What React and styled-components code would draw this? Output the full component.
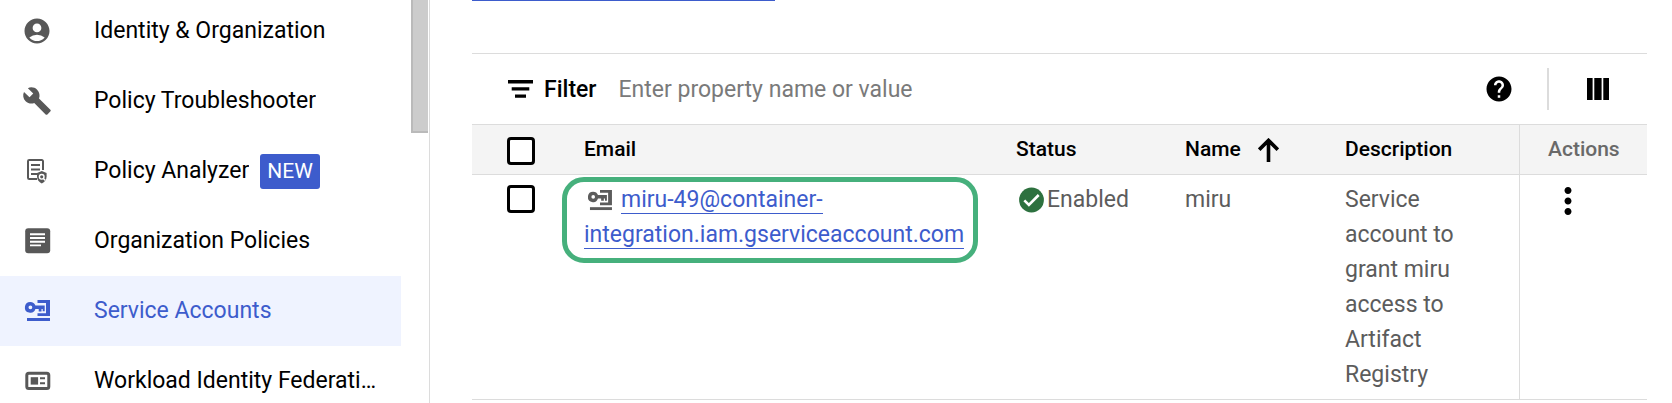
import React from "react";
import styled, { createGlobalStyle, css } from "styled-components";
import { MdAccountCircle, MdBuild, MdHelp, MdMoreVert } from "react-icons/md";

const color = {
  text: "#000000",
  muted: "#5c5c5c",
  icon: "#585858",
  link: "#3d5ccc",
  selected: "#eff3ff",
  line: "#dcdcdc",
  head: "#f4f4f4",
  enabled: "#2d713f",
  ring: "#46b07c",
};

const GlobalStyle = createGlobalStyle`
  *, *::before, *::after { box-sizing: border-box; }
  body {
    margin: 0;
    background: #ffffff;
    color: ${color.text};
    font-family: Roboto, "Liberation Sans", sans-serif;
    font-size: 23px;
    line-height: 35px;
  }
`;

const Shell = styled.div`
  display: flex;
  height: 100vh;
  overflow: hidden;
`;

const Sidebar = styled.aside`
  display: flex;
  flex: 0 0 430px;
  border-right: 1px solid ${color.line};
  overflow: hidden;
`;

const NavList = styled.nav`
  flex: 0 0 401px;
  min-width: 0;
  margin-top: -4px;
`;

const NavLink = styled.a`
  display: flex;
  align-items: center;
  height: 70px;
  padding: 0 24px 0 22px;
  color: ${({ $selected }) => ($selected ? color.link : color.text)};
  background: ${({ $selected }) => ($selected ? color.selected : "transparent")};
  text-decoration: none;

  svg {
    flex: none;
    width: 30px;
    height: 30px;
    margin-right: 42px;
    color: ${({ $selected }) => ($selected ? color.link : color.icon)};
  }
`;

const NavLabel = styled.span`
  padding-bottom: 2px;
  overflow: hidden;
  text-overflow: ellipsis;
  white-space: nowrap;
`;

const Badge = styled.span`
  margin-left: 11px;
  padding: 0 7px;
  border-radius: 3px;
  background: ${color.link};
  color: #ffffff;
  font-size: 21px;
`;

const ScrollThumb = styled.div`
  width: 17px;
  height: 133px;
  margin-left: 10px;
  border: solid #bababa;
  border-width: 0 0 2px 2px;
  background: #cccccc;
`;

const Main = styled.main`
  flex: 1;
  min-width: 0;
  padding: 0 25px 0 42px;
`;

const TabUnderline = styled.div`
  width: 303px;
  height: 1px;
  margin-bottom: 52px;
  background: ${color.link};
`;

const Toolbar = styled.div`
  display: flex;
  align-items: center;
  height: 71px;
  padding: 0 38px 0 36px;
  border-top: 1px solid ${color.line};
`;

const FilterLabel = styled.label`
  display: flex;
  align-items: center;
  gap: 11px;
  font-weight: 500;
`;

const FilterInput = styled.input`
  flex: 1;
  min-width: 0;
  margin: 0 22px;
  padding: 0;
  border: 0;
  outline: 0;
  background: transparent;
  font: inherit;

  &::placeholder {
    color: #7a7a7a;
    opacity: 1;
  }
`;

const IconButton = styled.button`
  display: flex;
  padding: 0;
  border: 0;
  background: transparent;
  color: ${color.text};
  cursor: pointer;
`;

const ToolbarDivider = styled.div`
  width: 2px;
  height: 42px;
  margin: 0 38px 0 33px;
  background: ${color.line};
`;

const Table = styled.table`
  width: 100%;
  table-layout: fixed;
  border-collapse: separate;
  border-spacing: 0;
`;

const Column = styled.col`
  width: ${({ $width }) => ($width ? `${$width}px` : "auto")};
`;

const cell = css`
  padding: 7px 28px;
  border-bottom: 1px solid ${color.line};
  text-align: left;
`;

const HeadCell = styled.th`
  ${cell}
  height: 51px;
  padding: ${({ $check }) => ($check ? "8px 0 6px 35px" : "7px 0 7px 28px")};
  border-top: 1px solid ${color.line};
  border-left: ${({ $divided }) => ($divided ? `1px solid ${color.line}` : 0)};
  background: ${color.head};
  color: ${({ $divided }) => ($divided ? "#696969" : color.text)};
  font-size: 21px;
  font-weight: 500;
`;

const Cell = styled.td`
  ${cell}
  padding-left: ${({ $check }) => ($check ? 35 : 28)}px;
  padding-right: ${({ $check }) => ($check ? 0 : 28)}px;
  border-left: ${({ $divided }) => ($divided ? `1px solid ${color.line}` : 0)};
  color: ${color.muted};
  vertical-align: top;
`;

const EmailCell = styled(Cell)`
  position: relative;
`;

const Checkbox = styled.input`
  appearance: none;
  display: block;
  width: 28px;
  height: 28px;
  margin: 3px 0;
  border: 3px solid #000000;
  border-radius: 4px;
  background: #ffffff;
`;

const SortButton = styled(IconButton)`
  align-items: center;
  gap: 17px;
  font: inherit;
`;

const Highlight = styled.div`
  position: absolute;
  top: 2px;
  left: 6px;
  right: 10px;
  height: 86px;
  border: 5px solid ${color.ring};
  border-radius: 22px;
  pointer-events: none;
`;

const EmailLink = styled.a`
  border-bottom: 1px solid ${color.link};
  color: ${color.link};
  text-decoration: none;
`;

const InlineKey = styled.svg`
  width: 24px;
  height: 22px;
  margin: 0 9px 0 4px;
  vertical-align: -4px;
`;

const Status = styled.span`
  display: flex;
  align-items: center;
  gap: 1px;

  svg {
    flex: none;
  }
`;

const MenuButton = styled(IconButton)`
  margin: -2px 0 0 -1px;
`;

function KeyShape() {
  return (
    <g fill="currentColor">
      <path
        fillRule="evenodd"
        d="M8.4 5.9a5.4 5.4 0 0 1 5 3.5h9.3v5.8h-2V13h-1.2v2.4h-2.8V13h-3.3a5.4 5.4 0 1 1-5-7.1Zm0 3.5a1.9 1.9 0 1 0 0 3.8 1.9 1.9 0 0 0 0-3.8Z"
      />
      <path d="M15.5 4H28v16H15.5v-2.8H24V7h-8.5Z" />
      <path d="M5 22h23v3H5Z" />
    </g>
  );
}

function KeyIcon() {
  return (
    <svg viewBox="0 0 30 30" aria-hidden="true">
      <KeyShape />
    </svg>
  );
}

function AnalyzerIcon() {
  return (
    <svg viewBox="0 0 30 30" fill="none" stroke="currentColor" strokeWidth="2" aria-hidden="true">
      <path d="M15 23H7.2a1.2 1.2 0 0 1-1.2-1.2V5.2A1.2 1.2 0 0 1 7.2 4h12.6A1.2 1.2 0 0 1 21 5.2V14" />
      <path d="M9 9h9M9 13.5h9M9 18h6" />
      <path
        d="m19.8 15 4.8 2v3.6c0 3.3-2 5.8-4.8 6.9-2.8-1.1-4.8-3.6-4.8-6.9V17Z"
        fill="currentColor"
        stroke="none"
      />
      <circle cx="19.7" cy="20.8" r="2.3" stroke="#ffffff" strokeWidth="1.4" />
      <path d="m21.4 22.5 2 2" stroke="#ffffff" strokeWidth="1.4" />
    </svg>
  );
}

function PoliciesIcon() {
  return (
    <svg viewBox="0 0 30 30" aria-hidden="true">
      <rect x="3.2" y="2.2" width="25" height="25" rx="3" fill="currentColor" />
      <path d="M8 8.3h15M8 12h15M8 15.7h15M8 19.4h11" stroke="#ffffff" strokeWidth="1.9" />
    </svg>
  );
}

function WorkloadIcon() {
  return (
    <svg viewBox="0 0 30 30" fill="none" stroke="currentColor" aria-hidden="true">
      <rect x="4.8" y="7.2" width="22" height="15.4" rx="2" strokeWidth="3" />
      <rect x="8.7" y="11.2" width="7.4" height="7.4" fill="currentColor" stroke="none" />
      <path d="M18 12.3h5M18 17.3h5" strokeWidth="2" />
    </svg>
  );
}

function FilterIcon() {
  return (
    <svg width="25" height="18" viewBox="0 0 25 18" fill="currentColor" aria-hidden="true">
      <path d="M0 0h25v3.5H0ZM3.7 7.2h17.6v3.4H3.7ZM7 14.4h11v3.4H7Z" />
    </svg>
  );
}

function ColumnsIcon() {
  return (
    <svg width="22" height="22" viewBox="0 0 22 22" fill="currentColor" aria-hidden="true">
      <path d="M0 0h5.6v22H0ZM7.3 0h7.3v22H7.3ZM16.3 0h5.7v22h-5.7Z" />
    </svg>
  );
}

function ArrowUpIcon() {
  return (
    <svg width="21" height="24" viewBox="0 0 21 24" fill="none" stroke="currentColor" strokeWidth="3.6" aria-hidden="true">
      <path d="M10.5 24V3M1.2 11.7l9.3-9.3 9.3 9.3" />
    </svg>
  );
}

function EnabledIcon() {
  return (
    <svg width="30" height="30" viewBox="0 0 30 30" aria-hidden="true">
      <circle cx="15.5" cy="15" r="12.4" fill={color.enabled} />
      <path d="m8.3 15.4 4.6 4.6 9.8-10" fill="none" stroke="#ffffff" strokeWidth="2.6" />
    </svg>
  );
}

const navItems = [
  { label: "Identity & Organization", icon: MdAccountCircle },
  { label: "Policy Troubleshooter", icon: MdBuild },
  { label: "Policy Analyzer", icon: AnalyzerIcon, badge: "NEW" },
  { label: "Organization Policies", icon: PoliciesIcon },
  { label: "Service Accounts", icon: KeyIcon, selected: true },
  { label: "Workload Identity Federation", icon: WorkloadIcon },
];

export default function App() {
  return (
    <>
      <GlobalStyle />
      <Shell>
        <Sidebar>
          <NavList aria-label="IAM & Admin">
            {navItems.map(({ label, icon: Icon, badge, selected }) => (
              <NavLink key={label} href="#" $selected={selected} aria-current={selected ? "page" : undefined}>
                <Icon />
                <NavLabel>{label}</NavLabel>
                {badge && <Badge>{badge}</Badge>}
              </NavLink>
            ))}
          </NavList>
          <ScrollThumb />
        </Sidebar>
        <Main>
          <TabUnderline />
          <Toolbar>
            <FilterLabel htmlFor="filter">
              <FilterIcon />
              Filter
            </FilterLabel>
            <FilterInput id="filter" type="text" placeholder="Enter property name or value" />
            <IconButton type="button" aria-label="Help">
              <MdHelp size={30} />
            </IconButton>
            <ToolbarDivider />
            <IconButton type="button" aria-label="Column display options">
              <ColumnsIcon />
            </IconButton>
          </Toolbar>
          <Table>
            <colgroup>
              <Column $width={84} />
              <Column />
              <Column $width={169} />
              <Column $width={160} />
              <Column $width={202} />
              <Column $width={128} />
            </colgroup>
            <thead>
              <tr>
                <HeadCell $check>
                  <Checkbox type="checkbox" aria-label="Select all rows" />
                </HeadCell>
                <HeadCell>Email</HeadCell>
                <HeadCell>Status</HeadCell>
                <HeadCell aria-sort="ascending">
                  <SortButton type="button">
                    Name
                    <ArrowUpIcon />
                  </SortButton>
                </HeadCell>
                <HeadCell>Description</HeadCell>
                <HeadCell $divided>Actions</HeadCell>
              </tr>
            </thead>
            <tbody>
              <tr>
                <Cell $check>
                  <Checkbox type="checkbox" aria-label="Select miru" />
                </Cell>
                <EmailCell>
                  <InlineKey viewBox="3 3 25 23" aria-hidden="true">
                    <KeyShape />
                  </InlineKey>
                  <EmailLink href="#">miru-49@container-integration.iam.gserviceaccount.com</EmailLink>
                  <Highlight />
                </EmailCell>
                <Cell>
                  <Status>
                    <EnabledIcon />
                    Enabled
                  </Status>
                </Cell>
                <Cell>miru</Cell>
                <Cell>Service account to grant miru access to Artifact Registry</Cell>
                <Cell $divided>
                  <MenuButton type="button" aria-label="Actions for miru">
                    <MdMoreVert size={42} color="#000000" />
                  </MenuButton>
                </Cell>
              </tr>
            </tbody>
          </Table>
        </Main>
      </Shell>
    </>
  );
}
